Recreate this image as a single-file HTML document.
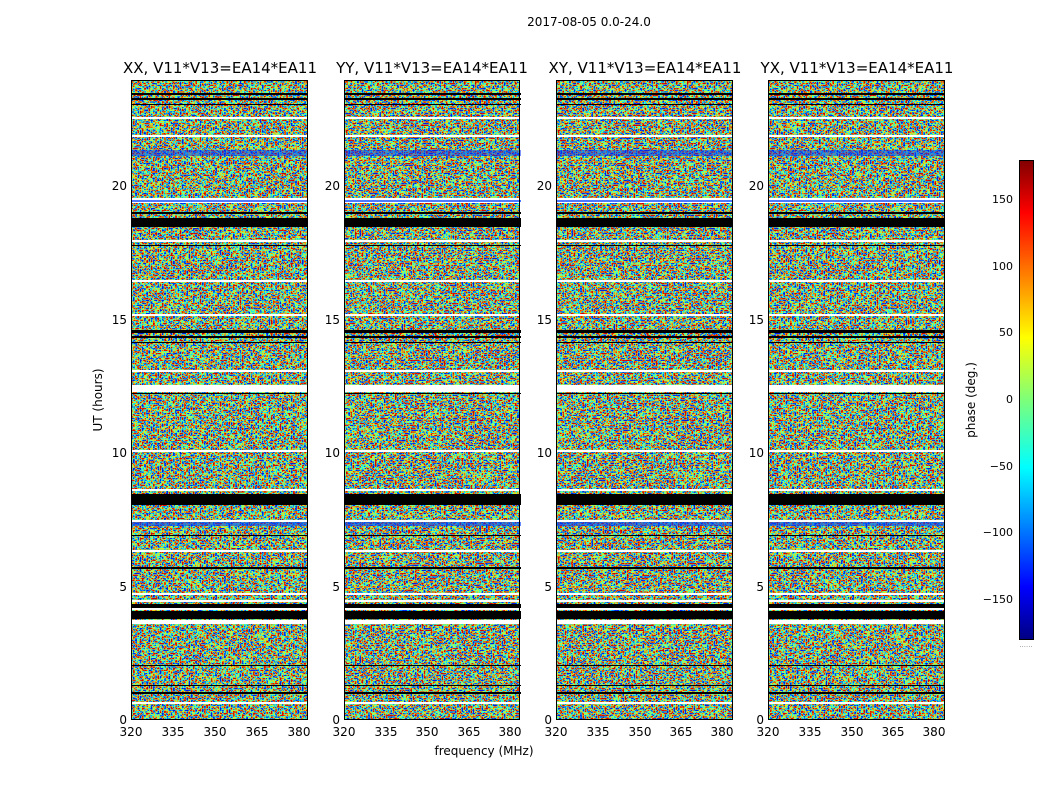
<!DOCTYPE html>
<html><head><meta charset="utf-8"><style>
html,body{margin:0;padding:0;background:#fff;}
svg{display:block;font-family:"DejaVu Sans","Liberation Sans",sans-serif;}
</style></head><body>
<svg width="1050" height="800" viewBox="0 0 1050 800" xmlns="http://www.w3.org/2000/svg">
<defs>
<filter id="n1" x="0" y="0" width="100%" height="100%" filterUnits="objectBoundingBox" color-interpolation-filters="sRGB">
<feTurbulence type="fractalNoise" baseFrequency="0.45 0.6" numOctaves="1" seed="3"/>
<feColorMatrix type="matrix" values="1 0 0 0 0  1 0 0 0 0  1 0 0 0 0  0 0 0 0 1"/>
<feComponentTransfer><feFuncR type="linear" slope="3.2" intercept="-1.1"/><feFuncG type="linear" slope="3.2" intercept="-1.1"/><feFuncB type="linear" slope="3.2" intercept="-1.1"/></feComponentTransfer>
<feComponentTransfer><feFuncR type="table" tableValues="0 0 0 0.6 1 1 0.8"/><feFuncG type="table" tableValues="0.1 0.5 1 1 0.9 0.2 0"/><feFuncB type="table" tableValues="0.9 1 1 0.4 0 0 0"/></feComponentTransfer>
</filter>
<filter id="n2" x="0" y="0" width="100%" height="100%" filterUnits="objectBoundingBox" color-interpolation-filters="sRGB">
<feTurbulence type="fractalNoise" baseFrequency="0.45 0.6" numOctaves="1" seed="11"/>
<feColorMatrix type="matrix" values="1 0 0 0 0  1 0 0 0 0  1 0 0 0 0  0 0 0 0 1"/>
<feComponentTransfer><feFuncR type="linear" slope="3.2" intercept="-1.1"/><feFuncG type="linear" slope="3.2" intercept="-1.1"/><feFuncB type="linear" slope="3.2" intercept="-1.1"/></feComponentTransfer>
<feComponentTransfer><feFuncR type="table" tableValues="0 0 0 0.6 1 1 0.8"/><feFuncG type="table" tableValues="0.1 0.5 1 1 0.9 0.2 0"/><feFuncB type="table" tableValues="0.9 1 1 0.4 0 0 0"/></feComponentTransfer>
</filter>
<linearGradient id="jet" x1="0" y1="1" x2="0" y2="0">
<stop offset="0" stop-color="#000080"/><stop offset="0.11" stop-color="#0000ff"/><stop offset="0.36" stop-color="#00ffff"/><stop offset="0.5" stop-color="#7dff7a"/><stop offset="0.63" stop-color="#ffff00"/><stop offset="0.89" stop-color="#ff0000"/><stop offset="1" stop-color="#800000"/>
</linearGradient>
<g id="bands">
<rect x="0" y="13" width="177" height="2" fill="#000"/>
<rect x="0" y="18" width="177" height="2" fill="#000"/>
<rect x="0" y="24" width="177" height="1" fill="#000"/>
<rect x="0" y="37" width="177" height="2" fill="#fff"/>
<rect x="0" y="55" width="177" height="2" fill="#fff"/>
<rect x="0" y="70" width="177" height="6" fill="#0030ff" opacity="0.5"/>
<rect x="0" y="118" width="177" height="5" fill="#fff"/>
<rect x="0" y="120" width="177" height="2" fill="#0040ff" opacity="0.7"/>
<rect x="0" y="132" width="177" height="2" fill="#000"/>
<rect x="0" y="138" width="177" height="9" fill="#000"/>
<rect x="0" y="160" width="177" height="2" fill="#fff"/>
<rect x="0" y="165" width="177" height="1" fill="#000"/>
<rect x="0" y="200" width="177" height="2" fill="#fff"/>
<rect x="0" y="234" width="177" height="2" fill="#fff"/>
<rect x="0" y="250" width="177" height="3" fill="#000"/>
<rect x="0" y="256" width="177" height="2" fill="#000"/>
<rect x="0" y="262" width="177" height="1" fill="#000"/>
<rect x="0" y="290" width="177" height="2" fill="#fff"/>
<rect x="0" y="305" width="177" height="7" fill="#fff"/>
<rect x="0" y="313" width="177" height="1" fill="#000"/>
<rect x="0" y="370" width="177" height="2" fill="#fff"/>
<rect x="0" y="409" width="177" height="2" fill="#fff"/>
<rect x="0" y="414" width="177" height="11" fill="#000"/>
<rect x="0" y="440" width="177" height="2" fill="#fff"/>
<rect x="0" y="442" width="177" height="4" fill="#0040ff" opacity="0.6"/>
<rect x="0" y="455" width="177" height="1" fill="#000"/>
<rect x="0" y="470" width="177" height="2" fill="#fff"/>
<rect x="0" y="487" width="177" height="2" fill="#000"/>
<rect x="0" y="513" width="177" height="2" fill="#fff"/>
<rect x="0" y="520" width="177" height="2" fill="#fff"/>
<rect x="0" y="524" width="177" height="4" fill="#000"/>
<rect x="0" y="528" width="177" height="2" fill="#fff"/>
<rect x="0" y="531" width="177" height="8" fill="#000"/>
<rect x="0" y="540" width="177" height="4" fill="#fff"/>
<rect x="0" y="585" width="177" height="1" fill="#000"/>
<rect x="0" y="605" width="177" height="1" fill="#000"/>
<rect x="0" y="612" width="177" height="2" fill="#000"/>
<rect x="0" y="622" width="177" height="2" fill="#fff"/>
</g>
</defs>

<text x="589" y="26" font-size="12" text-anchor="middle">2017-08-05 0.0-24.0</text>

<g font-size="15">
<text x="220" y="73" text-anchor="middle">XX, V11*V13=EA14*EA11</text>
<text x="432" y="73" text-anchor="middle">YY, V11*V13=EA14*EA11</text>
<text x="645" y="73" text-anchor="middle">XY, V11*V13=EA14*EA11</text>
<text x="857" y="73" text-anchor="middle">YX, V11*V13=EA14*EA11</text>
</g>

<g transform="translate(131,80)"><rect width="177" height="640" fill="#fff" filter="url(#n1)"/><use href="#bands"/></g>
<g transform="translate(344,80)"><rect width="176" height="640" fill="#fff" filter="url(#n2)"/><use href="#bands"/></g>
<g transform="translate(556,80)"><rect width="177" height="640" fill="#fff" filter="url(#n2)"/><use href="#bands"/></g>
<g transform="translate(768,80)"><rect width="177" height="640" fill="#fff" filter="url(#n1)"/><use href="#bands"/></g>

<g fill="none" stroke="#000" stroke-width="1">
<rect x="131.5" y="80.5" width="176" height="639"/>
<rect x="344.5" y="80.5" width="175" height="639"/>
<rect x="556.5" y="80.5" width="176" height="639"/>
<rect x="768.5" y="80.5" width="176" height="639"/>
</g>

<g font-size="12" text-anchor="end">
<text x="127" y="724">0</text><text x="127" y="591">5</text><text x="127" y="457">10</text><text x="127" y="324">15</text><text x="127" y="190">20</text>
<text x="340" y="724">0</text><text x="340" y="591">5</text><text x="340" y="457">10</text><text x="340" y="324">15</text><text x="340" y="190">20</text>
<text x="552" y="724">0</text><text x="552" y="591">5</text><text x="552" y="457">10</text><text x="552" y="324">15</text><text x="552" y="190">20</text>
<text x="764" y="724">0</text><text x="764" y="591">5</text><text x="764" y="457">10</text><text x="764" y="324">15</text><text x="764" y="190">20</text>
</g>
<g font-size="12" text-anchor="middle">
<text x="131" y="736">320</text><text x="173" y="736">335</text><text x="215" y="736">350</text><text x="257" y="736">365</text><text x="299" y="736">380</text>
<text x="344" y="736">320</text><text x="386" y="736">335</text><text x="427" y="736">350</text><text x="469" y="736">365</text><text x="510" y="736">380</text>
<text x="556" y="736">320</text><text x="598" y="736">335</text><text x="640" y="736">350</text><text x="681" y="736">365</text><text x="722" y="736">380</text>
<text x="768" y="736">320</text><text x="810" y="736">335</text><text x="852" y="736">350</text><text x="893" y="736">365</text><text x="934" y="736">380</text>
</g>
<text x="484" y="755" font-size="12" text-anchor="middle">frequency (MHz)</text>
<text transform="translate(102,400) rotate(-90)" font-size="12" text-anchor="middle">UT (hours)</text>

<rect x="1019" y="160" width="15" height="480" fill="url(#jet)"/>
<rect x="1019.5" y="160.5" width="14" height="479" fill="none" stroke="#000"/>
<g font-size="11" text-anchor="end">
<text x="1013" y="203">150</text><text x="1013" y="270">100</text><text x="1013" y="336">50</text><text x="1013" y="403">0</text>
<text x="1013" y="470">−50</text><text x="1013" y="536">−100</text><text x="1013" y="603">−150</text>
</g>
<text transform="translate(975,400) rotate(-90)" font-size="12" text-anchor="middle">phase (deg.)</text>
<text x="1026" y="647" font-size="7" fill="#888" text-anchor="middle">......</text>
</svg>
</body></html>
